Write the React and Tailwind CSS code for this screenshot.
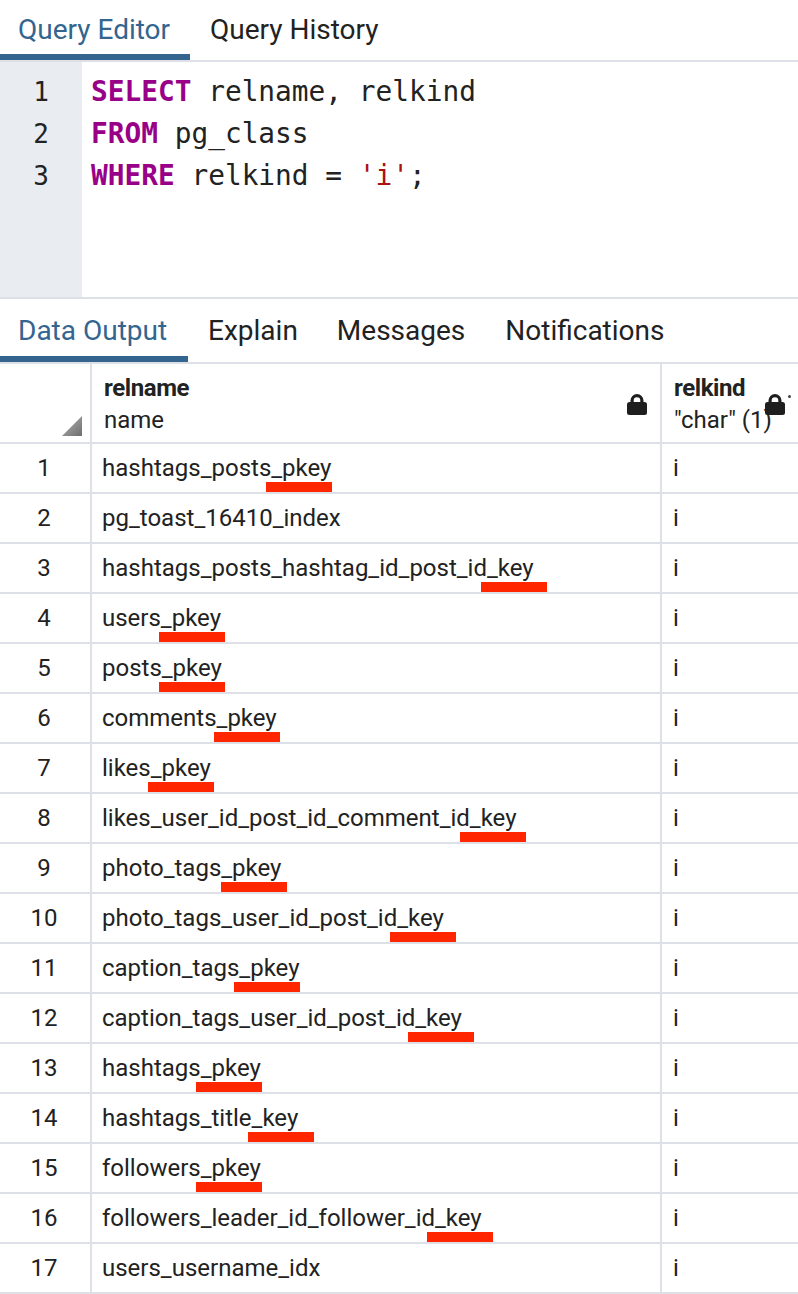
const rows = [
  { name: "hashtags_posts_pkey", mark: 266 },
  { name: "pg_toast_16410_index" },
  { name: "hashtags_posts_hashtag_id_post_id_key", mark: 481 },
  { name: "users_pkey", mark: 159 },
  { name: "posts_pkey", mark: 159 },
  { name: "comments_pkey", mark: 214 },
  { name: "likes_pkey", mark: 148 },
  { name: "likes_user_id_post_id_comment_id_key", mark: 460 },
  { name: "photo_tags_pkey", mark: 221 },
  { name: "photo_tags_user_id_post_id_key", mark: 390 },
  { name: "caption_tags_pkey", mark: 234 },
  { name: "caption_tags_user_id_post_id_key", mark: 408 },
  { name: "hashtags_pkey", mark: 196 },
  { name: "hashtags_title_key", mark: 248 },
  { name: "followers_pkey", mark: 196 },
  { name: "followers_leader_id_follower_id_key", mark: 427 },
  { name: "users_username_idx" },
];

const Lock = ({ className }) => (
  <svg viewBox="0 0 22 22" className={className} fill="#1e1e1e">
    <path d="M4.5 10V7.5a6.5 6.5 0 0 1 13 0V10h-3.2V7.5a3.3 3.3 0 0 0-6.6 0V10z" />
    <rect x="1" y="9" width="20" height="13" rx="2.5" />
  </svg>
);

const Tab = ({ label, active, className = "" }) => (
  <div
    className={`h-full flex items-center border-b-[6px] pt-[6px] ${active ? "border-[#33658f] text-[#33658f]" : "border-transparent text-[#222]"} ${className}`}
  >
    {label}
  </div>
);

const Kw = ({ children }) => <span className="text-[#990088] font-semibold">{children}</span>;

export default function App() {
  return (
    <div className="w-[798px] h-[1294px] overflow-hidden bg-white font-['Roboto',sans-serif] text-[#222]">
      {/* query tabs */}
      <div className="h-[62px] flex border-b-2 border-[#dde1e7] text-[28px]">
        <Tab label="Query Editor" active className="w-[190px] pl-[18px]" />
        <Tab label="Query History" className="pl-[20px]" />
      </div>

      {/* editor */}
      <div className="h-[237px] flex border-b-2 border-[#dde1e7] font-['DejaVu_Sans_Mono',monospace]">
        <div className="w-[82px] bg-[#e9ecf1] pt-[9px] text-center text-[26px] text-[#222]">
          <div className="h-[42px] leading-[42px]">1</div>
          <div className="h-[42px] leading-[42px]">2</div>
          <div className="h-[42px] leading-[42px]">3</div>
        </div>
        <div className="flex-1 pt-[9px] pl-[9px] text-[27.8px] text-[#222]">
          <div className="h-[42px] leading-[42px] whitespace-pre"><Kw>SELECT</Kw> relname, relkind</div>
          <div className="h-[42px] leading-[42px] whitespace-pre"><Kw>FROM</Kw> pg_class</div>
          <div className="h-[42px] leading-[42px] whitespace-pre"><Kw>WHERE</Kw> relkind = <span className="text-[#aa1111]">'i'</span>;</div>
        </div>
      </div>

      {/* output tabs */}
      <div className="h-[65px] flex border-b-2 border-[#dde1e7] text-[28px]">
        <Tab label="Data Output" active className="w-[188px] pl-[18px]" />
        <Tab label="Explain" className="pl-[20px] pr-[19px]" />
        <Tab label="Messages" className="pl-[20px] pr-[20px]" />
        <Tab label="Notifications" className="pl-[20px]" />
      </div>

      {/* grid header */}
      <div className="h-[80px] flex border-b-2 border-[#dde1e7] text-[24px]">
        <div className="w-[92px] border-r-2 border-[#dde1e7] relative">
          <svg viewBox="0 0 20 20" className="absolute left-[62px] bottom-[6px] w-[20px] h-[20px]">
            <defs>
              <linearGradient id="tri" x1="1" y1="1" x2="0" y2="0">
                <stop offset="0" stopColor="#6e6e6e" />
                <stop offset="1" stopColor="#b5b5b5" />
              </linearGradient>
            </defs>
            <polygon points="20,0 20,20 0,20" fill="url(#tri)" />
          </svg>
        </div>
        <div className="w-[570px] border-r-2 border-[#dde1e7] relative pl-[12px] pt-[8px] leading-[32px]">
          <div className="font-bold tracking-[-0.4px]">relname</div>
          <div>name</div>
          <Lock className="absolute right-[12px] top-[29px] w-[22px] h-[22px]" />
        </div>
        <div className="flex-1 relative pl-[12px] pt-[8px] leading-[32px] whitespace-nowrap overflow-hidden">
          <div className="font-bold tracking-[-0.4px]">relkind</div>
          <div>"char" (1)</div>
          <Lock className="absolute right-[12px] top-[29px] w-[22px] h-[22px]" />
          <div className="absolute right-[7px] top-[31px] w-[3px] h-[3px] bg-[#444] rounded-full" />
        </div>
      </div>

      {/* grid rows */}
      {rows.map((r, i) => (
        <div key={i} className="h-[50px] flex border-b-2 border-[#dde1e7] text-[24px] leading-[48px]">
          <div className="w-[92px] border-r-2 border-[#dde1e7] text-center pr-[2px]">{i + 1}</div>
          <div className="w-[570px] border-r-2 border-[#dde1e7] relative pl-[10px] whitespace-nowrap">
            {r.name}
            {r.mark && (
              <div
                className="absolute bottom-0 h-[10px] w-[66px] bg-[#ff2600]"
                style={{ left: r.mark - 92 }}
              />
            )}
          </div>
          <div className="flex-1 pl-[11px]">i</div>
        </div>
      ))}
    </div>
  );
}
